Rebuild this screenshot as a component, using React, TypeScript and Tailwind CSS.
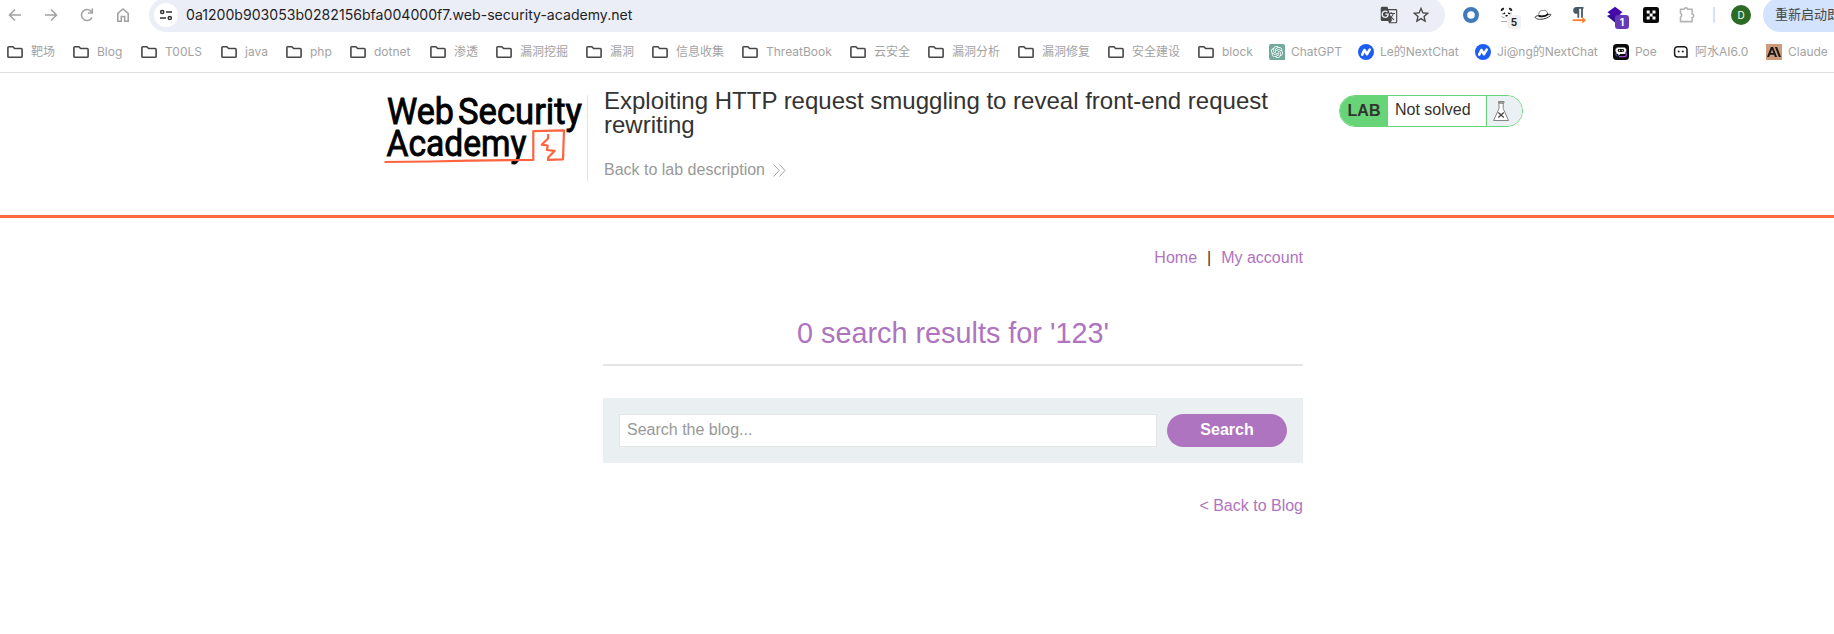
import React from "react";
import { SiAnthropic, SiOpenai } from "react-icons/si";
import { MdGTranslate, MdStarBorder } from "react-icons/md";

const UI = "font-[Inter,'Noto_Sans_CJK_SC',sans-serif]";

function Folder() {
  return (
    <svg className="h-4 w-4" viewBox="0 0 16 16" fill="none" stroke="#474747" strokeWidth="1.6">
      <path d="M.9 12.4V3.600a.9.9 0 0 1 .9-.9h4.100l1.700 1.800h6.600a.9.9 0 0 1 .9.9v7a.9.9 0 0 1-.9.9H1.800a.9.9 0 0 1-.9-.9z" />
    </svg>
  );
}

function NextChat() {
  return (
    <svg className="h-4 w-4" viewBox="0 0 16 16">
      <circle cx="8" cy="8" r="8" fill="#1d5df5" />
      <path d="M4.200 10.600 6.400 6l2.600 4.200L11.700 5.600" fill="none" stroke="#fff" strokeWidth="2.600" strokeLinecap="round" strokeLinejoin="round" />
    </svg>
  );
}

function ChatGPT() {
  return (
    <span className="flex h-4 w-4 items-center justify-center rounded-[2px] rounded-br-none bg-[#74aa9c]">
      <SiOpenai className="h-3 w-3 text-white" />
    </span>
  );
}

function Poe() {
  return (
    <svg className="h-4 w-4" viewBox="0 0 16 16">
      <rect width="16" height="16" rx="3.500" fill="#0a0a0a" />
      <path d="M6 12.700h5.300a2 2 0 0 0 2-2V8.500" fill="none" stroke="#a04bd8" strokeWidth="1.200" />
      <path d="M2.900 9.300v1.400a1.500 1.500 0 0 0 1.300 1.500" fill="none" stroke="#4f6bea" strokeWidth="1" />
      <path d="M4.600 3.400h6.600a1.300 1.300 0 0 1 1.300 1.300h.8v3.100h-.8v.9a1.300 1.300 0 0 1-1.300 1.300H7.300l-2 1.700V10h-.7a1.300 1.300 0 0 1-1.300-1.300v-.9h-.8V4.700h.8a1.300 1.300 0 0 1 1.300-1.300z" fill="#fff" />
      <rect x="4.700" y="5" width="6.400" height="3" rx="1.400" fill="#111" />
      <path d="M6.500 5.800v1.400M9.300 5.800v1.400" stroke="#fff" strokeWidth="1" />
    </svg>
  );
}

function Ashui() {
  return (
    <svg className="h-4 w-4" viewBox="0 0 16 16">
      <path d="M4.600 2.700h6.400a3 3 0 0 1 3 3v7.400H4.600a3 3 0 0 1-3-3V5.700a3 3 0 0 1 3-3z" fill="#fff" stroke="#1c1c1c" strokeWidth="1.500" />
      <circle cx="5.700" cy="7.500" r="1" fill="#222" />
      <circle cx="9.800" cy="7.500" r="1" fill="#222" />
    </svg>
  );
}

function Claude() {
  return (
    <span className="flex h-4 w-4 items-center justify-center bg-[#cc9b7a]">
      <SiAnthropic className="h-[14px] w-[14px] text-[#1a1a1a]" />
    </span>
  );
}

type Mark = { label: string; w: string; Icon?: () => React.ReactElement };

const bookmarks: Mark[] = [
  { label: "靶场", w: "w-[66px]" },
  { label: "Blog", w: "w-[68px]" },
  { label: "T00LS", w: "w-[80px]" },
  { label: "java", w: "w-[65px]" },
  { label: "php", w: "w-[64px]" },
  { label: "dotnet", w: "w-[80px]" },
  { label: "渗透", w: "w-[66px]" },
  { label: "漏洞挖掘", w: "w-[90px]" },
  { label: "漏洞", w: "w-[66px]" },
  { label: "信息收集", w: "w-[90px]" },
  { label: "ThreatBook", w: "w-[108px]" },
  { label: "云安全", w: "w-[78px]" },
  { label: "漏洞分析", w: "w-[90px]" },
  { label: "漏洞修复", w: "w-[90px]" },
  { label: "安全建设", w: "w-[90px]" },
  { label: "block", w: "w-[71px]" },
  { label: "ChatGPT", w: "w-[89px]", Icon: ChatGPT },
  { label: "Le的NextChat", w: "w-[117px]", Icon: NextChat },
  { label: "Ji@ng的NextChat", w: "w-[138px]", Icon: NextChat },
  { label: "Poe", w: "w-[60px]", Icon: Poe },
  { label: "阿水AI6.0", w: "w-[93px]", Icon: Ashui },
  { label: "Claude", w: "w-[68px]", Icon: Claude },
];

function NavIcons() {
  const c = "h-[18px] w-[18px]";
  const p = { viewBox: "0 0 18 18", fill: "none", stroke: "#a3a3a3", strokeWidth: 1.6 };
  return (
    <div className="flex gap-[18px]">
      <svg className={c} {...p}><path d="M15 9H4M9 3.500 3.500 9 9 14.500" /></svg>
      <svg className={c} {...p}><path d="M3 9h11M9 3.500 14.500 9 9 14.500" /></svg>
      <svg className={c} {...p}><path d="M14 11.300A5.500 5.500 0 1 1 13.300 5.600L14.300 7M14.300 2.500V7H9.800" /></svg>
      <svg className={c} {...p}><path d="M3.800 7.300v7.900h3.500v-4.700h3.400v4.700h3.500V7.300L9 3z" /></svg>
    </div>
  );
}

function AddressBar() {
  return (
    <div className="ml-[17px] flex h-[34px] w-[1296px] shrink-0 items-center rounded-full bg-[#ebeef7] pr-[14px] pl-[5px]">
      <div className="flex h-6 w-6 items-center justify-center rounded-full bg-white">
        <svg className="h-4 w-4" viewBox="0 0 16 16" fill="none" stroke="#333" strokeWidth="1.500">
          <circle cx="4.200" cy="5" r="1.600" />
          <path d="M8 5h6M2 11h6" />
          <circle cx="11.800" cy="11" r="1.600" />
        </svg>
      </div>
      <div className="ml-2 grow text-[14.1px] text-[#1f1f1f]">0a1200b903053b0282156bfa004000f7.web-security-academy.net</div>
      <MdGTranslate className="h-[18px] w-[18px] text-[#474747]" />
      <MdStarBorder className="ml-[13px] h-5 w-5 text-[#474747]" />
    </div>
  );
}

function Badge({ text, color }: { text: string; color: string }) {
  return (
    <span className={`absolute top-[9px] left-[9px] flex h-[14px] w-[14px] items-center justify-center rounded-[3px] text-[10px] leading-none font-bold ${color}`}>
      {text}
    </span>
  );
}

function Extensions() {
  const c = "h-[18px] w-[18px]";
  return (
    <div className="ml-[17px] flex gap-[18px]">
      <svg className={c} viewBox="0 0 18 18"><circle cx="9" cy="9" r="5.900" fill="#fff" stroke="#3f7abb" strokeWidth="4.200" /></svg>
      <div className="relative">
        <svg className={c} viewBox="0 0 18 18">
          <path d="M3.700 5Q3.500 2.500 6 2.700M11 2.700Q13.500 2.500 13.300 5" fill="none" stroke="#222" strokeWidth="1.900" />
          <path d="M4.300 8.500V7M12.900 6.500v2" stroke="#999" strokeWidth="1" />
          <path d="m5.500 8 1.500-1.200M11.800 8l-1.500-1.200M7.500 9.800h2.300" stroke="#111" strokeWidth="1.500" />
          <path d="M3.500 10.500 6.500 12M3 15.500h6" stroke="#aaa" strokeWidth="1.200" />
        </svg>
        <Badge text="5" color="bg-[#f1f1f1] text-[#222]" />
      </div>
      <svg className={c} viewBox="0 0 18 18">
        <path d="M1.200 11C2 9.500 4 10 5.500 9.400L15 8.300c2.200-.4 2.300.6 1.200 1.500-2 2-6 3.500-10 3.500-2.500 0-5.400-.8-5-2.300z" fill="#fff" stroke="#222" strokeWidth=".9" />
        <path d="M4.800 9.700C4.800 6 6 4.300 8.500 4.600c2.500-.7 4.700-.3 5.300 3.600C11 10.500 7.500 11 4.800 9.700z" fill="#fff" stroke="#444" strokeWidth=".7" />
        <path d="M4.700 9C8 10 11.500 9.300 13.900 7.200l.5 1.900C11.500 11.300 7.500 11.900 4.500 10.700z" fill="#111" />
      </svg>
      <svg className={c} viewBox="0 0 18 18">
        <path d="M8.300 1.500v10.300M12 1.500v10.300M7.500 1.900h6" stroke="#455a64" strokeWidth="1.800" fill="none" />
        <path d="M8.300 1H6.600a3.400 3.400 0 0 0 0 6.800h1.700z" fill="#455a64" />
        <path d="M2.700 14.200h11" stroke="#ff7b25" strokeWidth="1.800" />
        <path d="m12.300 11 3.700 3.200-3.700 3.200z" fill="#ff7b25" />
      </svg>
      <div className="relative">
        <svg className={c} viewBox="0 0 18 18">
          <path d="m1 10 8-4 8 4-8 6.500z" fill="#35108f" />
          <path d="m1.500 6.300 7.500-5.500 7.500 5.500-7.500 5.700z" fill="#4608ad" />
        </svg>
        <Badge text="1" color="bg-[#673ab7] text-white" />
      </div>
      <svg className={c} viewBox="0 0 18 18">
        <rect x="1" y="1" width="16" height="16" rx="2.500" fill="#080808" />
        <path d="M4.700 4.500h3v3h-3zM10.500 4.500h3v3h-3zM7.600 7.500h3v3h-3zM4.700 10.500h3v3h-3zM10.500 10.500h3v3h-3z" fill="#fff" />
      </svg>
      <svg className={c} viewBox="0 0 18 18" fill="none" stroke="#b4b4b4" strokeWidth="1.600">
        <path d="M2.500 3.300H6a2 2 0 0 1 3.800 0h4.300v4.500a2 2 0 0 1 0 3.900v3.900H2.500v-4.300a2.300 2.300 0 0 0 0-4z" />
      </svg>
    </div>
  );
}

function Logo() {
  return (
    <svg className="h-[76px] w-[203px] overflow-visible" viewBox="384 92 203 76">
      <g fill="#000" stroke="#000" strokeWidth=".9" fontFamily="Roboto, sans-serif" fontWeight="400" fontSize="37">
        <text x="387" y="123.500" textLength="67" lengthAdjust="spacingAndGlyphs">Web</text>
        <text x="458" y="123.500" textLength="124" lengthAdjust="spacingAndGlyphs">Security</text>
        <text x="386.500" y="155.700" textLength="140" lengthAdjust="spacingAndGlyphs">Academy</text>
      </g>
      <g fill="none" stroke="#ff6340" strokeLinejoin="round">
        <path d="M384.500 162 430 161.500 470 160.700l63.300-.900V131.200L564 130.300l-1 29-16 .600" strokeWidth="2.200" />
        <path d="m548.200 134-.200 4.500-6.300 6.200 6 .8-.8 4.500 7.800.8-6.500 6.700v2.300" strokeWidth="2.200" />
      </g>
    </svg>
  );
}

function LabStatus() {
  return (
    <div className="mt-[22px] ml-[36px] flex h-8 w-[184px] overflow-hidden rounded-2xl border border-[#67d478] text-base text-[#333332]">
      <div className="flex w-12 items-center justify-center bg-[#67d478] font-bold">LAB</div>
      <div className="w-[99px] border-r border-[#67d478] pt-[2px] pl-[7px]">Not solved</div>
      <div className="grow bg-[#eaf0f3] pt-[5px] pl-[6px]">
        <svg className="h-5 w-4" viewBox="0 0 16 20" fill="none" stroke="#777" strokeWidth=".9">
          <path d="M5.500.500h5.500v1.500H5.500zM6 2v5.500L.6 19.500h14.900L10.200 7.500V2z" fill="#fff" />
          <path d="m5.300 11.500 5.500 5M10.800 11.500l-5.500 5" stroke="#444" strokeWidth="1.200" />
        </svg>
      </div>
    </div>
  );
}

export default function App() {
  return (
    <div className="h-[634px] w-[1834px] overflow-hidden bg-white font-['Liberation_Sans',Arial,sans-serif]">
      <header className={`flex h-[73px] flex-col border-b border-[#dedede] ${UI}`}>
        <div className="-mt-[2px] flex h-[34px] w-[1900px] shrink-0 items-center pl-[6px]">
          <NavIcons />
          <AddressBar />
          <Extensions />
          <div className="ml-[17px] h-4 w-[2px] bg-[#d3e3fd]" />
          <div className="ml-4 flex h-5 w-5 items-center justify-center rounded-full bg-[#2c6b25] text-[10px] text-white">D</div>
          <div className="ml-3 flex h-[34px] w-[130px] items-center rounded-full bg-[#d3e3fd] pl-3 text-[13px] whitespace-nowrap text-[#474747]">重新启动即可更新</div>
        </div>
        <nav className="mt-[11px] flex h-[18px] shrink-0 items-center pl-[7px]">
          {bookmarks.map(({ label, w, Icon = Folder }) => (
            <div key={label} className={`flex shrink-0 items-center text-xs whitespace-nowrap text-[#a3a3a3] ${w} ${Icon === Folder ? "gap-2" : "gap-[6px]"}`}>
              <Icon />
              <span>{label}</span>
            </div>
          ))}
        </nav>
      </header>

      <section className="flex h-[145px] border-b-[3px] border-[#ff6840] pl-[384px]">
        <div className="mt-[22px] h-[86px] w-[204px] border-r border-[#e4e4e4] pt-px">
          <div className="-mt-1"><Logo /></div>
        </div>
        <div className="w-[715px] pt-4 pl-4">
          <h2 className="text-2xl leading-6 text-[#333332]">Exploiting HTTP request smuggling to reveal front-end request rewriting</h2>
          <a className="mt-[21px] flex items-center text-base text-[#999]">
            Back to lab description
            <svg className="ml-2 h-[13px] w-[13px]" viewBox="0 0 13 13" fill="none" stroke="#999" strokeWidth=".9">
              <path d="m.7.500 5.500 6-5.500 6M6.500.500l5.500 6-5.500 6" />
            </svg>
          </a>
        </div>
        <LabStatus />
      </section>

      <main className="ml-[603px] w-[700px] text-base text-[#af74c0]">
        <div className="flex justify-end pt-7">
          <a>Home</a>
          <span className="mx-[10px] text-[#333332]">|</span>
          <a>My account</a>
        </div>
        <h1 className="mt-[47px] h-[49px] border-b-2 border-[#e4e4e4] text-center text-[28.8px] leading-[33px]">0 search results for '123'</h1>
        <form className="mt-8 flex h-[65px] items-center gap-[10px] bg-[#eaf0f2] px-4">
          <input className="h-[33px] w-[538px] border border-[#e4e4e4] bg-white px-[7px] pb-[2px] placeholder:text-[#999]" placeholder="Search the blog..." />
          <button type="button" className="h-[33px] w-[120px] rounded-full bg-[#af74c0] pb-[2px] font-bold text-white">Search</button>
        </form>
        <div className="mt-[31px] text-right"><a>&lt; Back to Blog</a></div>
      </main>
    </div>
  );
}
